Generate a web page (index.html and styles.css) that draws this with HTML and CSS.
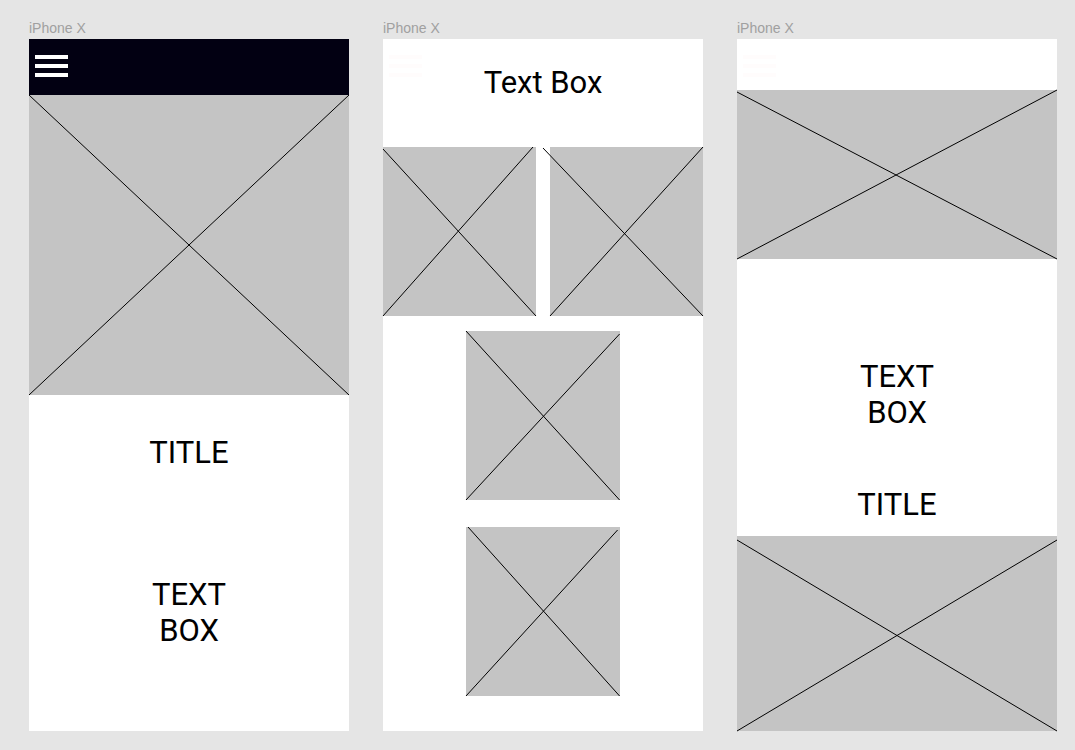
FILE: index.html
```html
<!DOCTYPE html>
<html lang="en">
<head>
<meta charset="utf-8">
<meta name="viewport" content="width=device-width, initial-scale=1">
<title>iPhone X wireframes</title>
<link rel="stylesheet" href="styles.css">
</head>
<body>
<main class="board">
  <section class="artboard">
    <h2 class="label">iPhone X</h2>
    <div class="screen">
      <header class="bar bar-dark">
        <button class="menu" type="button" aria-label="Menu"><svg class="menu-icon" viewBox="0 0 34 24" aria-hidden="true"><path d="M0 3h33M0 12h33M0 21h33"/></svg></button>
      </header>
      <svg class="media media-hero" viewBox="0 0 320 300" preserveAspectRatio="none" role="img" aria-label="Image placeholder"><path d="M0 0L320 300M0 300L320 0"/></svg>
      <h1 class="text title-below">TITLE</h1>
      <p class="text copy-below">TEXT<br>BOX</p>
    </div>
  </section>

  <section class="artboard">
    <h2 class="label">iPhone X</h2>
    <div class="screen">
      <header class="bar bar-tall">
        <button class="menu menu-faint" type="button" aria-label="Menu"><svg class="menu-icon" viewBox="0 0 34 24" aria-hidden="true"><path d="M0 3h33M0 12h33M0 21h33"/></svg></button>
        <h1 class="text heading">Text Box</h1>
      </header>
      <div class="pair">
        <svg class="media media-tile" viewBox="0 0 153 169" preserveAspectRatio="none" role="img" aria-label="Image placeholder"><path d="M0 2L153 169M0 169L150 0"/></svg>
        <svg class="media media-tile" viewBox="0 0 153 169" preserveAspectRatio="none" role="img" aria-label="Image placeholder"><path d="M-7 1L153 169M0 169L153 0"/></svg>
      </div>
      <div class="stack">
        <svg class="media media-tile media-single" viewBox="0 0 153 169" preserveAspectRatio="none" role="img" aria-label="Image placeholder"><path d="M0 0L153 169M0 169L153 3"/></svg>
        <svg class="media media-tile media-single" viewBox="0 0 153 169" preserveAspectRatio="none" role="img" aria-label="Image placeholder"><path d="M2 0L153 169M0 169L151 3"/></svg>
      </div>
    </div>
  </section>

  <section class="artboard">
    <h2 class="label">iPhone X</h2>
    <div class="screen">
      <header class="bar">
        <button class="menu menu-faint" type="button" aria-label="Menu"><svg class="menu-icon" viewBox="0 0 34 24" aria-hidden="true"><path d="M0 3h33M0 12h33M0 21h33"/></svg></button>
      </header>
      <svg class="media media-banner" viewBox="0 0 320 169" preserveAspectRatio="none" role="img" aria-label="Image placeholder"><path d="M0 2L320 169M0 169L320 0"/></svg>
      <p class="text copy-middle">TEXT<br>BOX</p>
      <h1 class="text title-above">TITLE</h1>
      <svg class="media media-footer" viewBox="0 0 320 195" preserveAspectRatio="none" role="img" aria-label="Image placeholder"><path d="M0 4L320 195M0 195L320 4"/></svg>
    </div>
  </section>
</main>
</body>
</html>
```
FILE: styles.css
```css
* {
  box-sizing: border-box;
  margin: 0;
}

body {
  min-height: 100vh;
  background: #e5e5e5;
  color: #000;
  font-family: Roboto, sans-serif;
}

.board {
  display: grid;
  grid-template-columns: repeat(3, minmax(0, 1fr));
  gap: 34px;
  min-height: 100vh;
  padding: 20px 18px 19px 29px;
}

.artboard {
  display: flex;
  flex-direction: column;
  gap: 3px;
}

.label {
  color: #a0a0a0;
  font: 400 14px/16px "Liberation Sans", Arial, sans-serif;
}

.screen {
  display: flex;
  flex: 1;
  flex-direction: column;
  background: #fff;
}

.bar {
  display: grid;
  align-content: start;
  min-height: 51px;
  padding: 15px 6px 0;
}

.bar-dark {
  min-height: 56px;
  background: #020012;
}

.bar-tall {
  min-height: 108px;
}

.menu {
  grid-area: 1 / 1;
  align-self: start;
  justify-self: start;
  padding: 0;
  border: 0;
  background: none;
  color: #fff;
  cursor: pointer;
}

.menu-faint {
  color: #fffcfc;
}

.menu-icon {
  display: block;
  width: 34px;
  height: 24px;
  fill: none;
  stroke: currentColor;
  stroke-width: 4;
}

.text {
  font-size: 31px;
  font-weight: 400;
  line-height: 36px;
  text-align: center;
}

.heading {
  grid-area: 1 / 1;
  justify-self: center;
  padding-top: 11px;
}

.title-below {
  padding-top: 40px;
}

.copy-below {
  padding-top: 106px;
}

.copy-middle {
  padding-top: 100px;
}

.title-above {
  margin-top: auto;
  padding-bottom: 13px;
}

.media {
  display: block;
  width: 100%;
  background: #c4c4c4;
  overflow: visible;
  fill: none;
  stroke: #000;
  stroke-width: 1;
}

.media path {
  vector-effect: non-scaling-stroke;
}

.media-hero {
  height: 300px;
}

.media-banner,
.media-tile {
  height: 169px;
}

.media-footer {
  height: 195px;
}

.pair {
  display: grid;
  grid-template-columns: 1fr 1fr;
  gap: 14px;
}

.stack {
  display: grid;
  gap: 27px;
  justify-items: center;
  padding-top: 15px;
}

.media-single {
  width: 48%;
}
```
